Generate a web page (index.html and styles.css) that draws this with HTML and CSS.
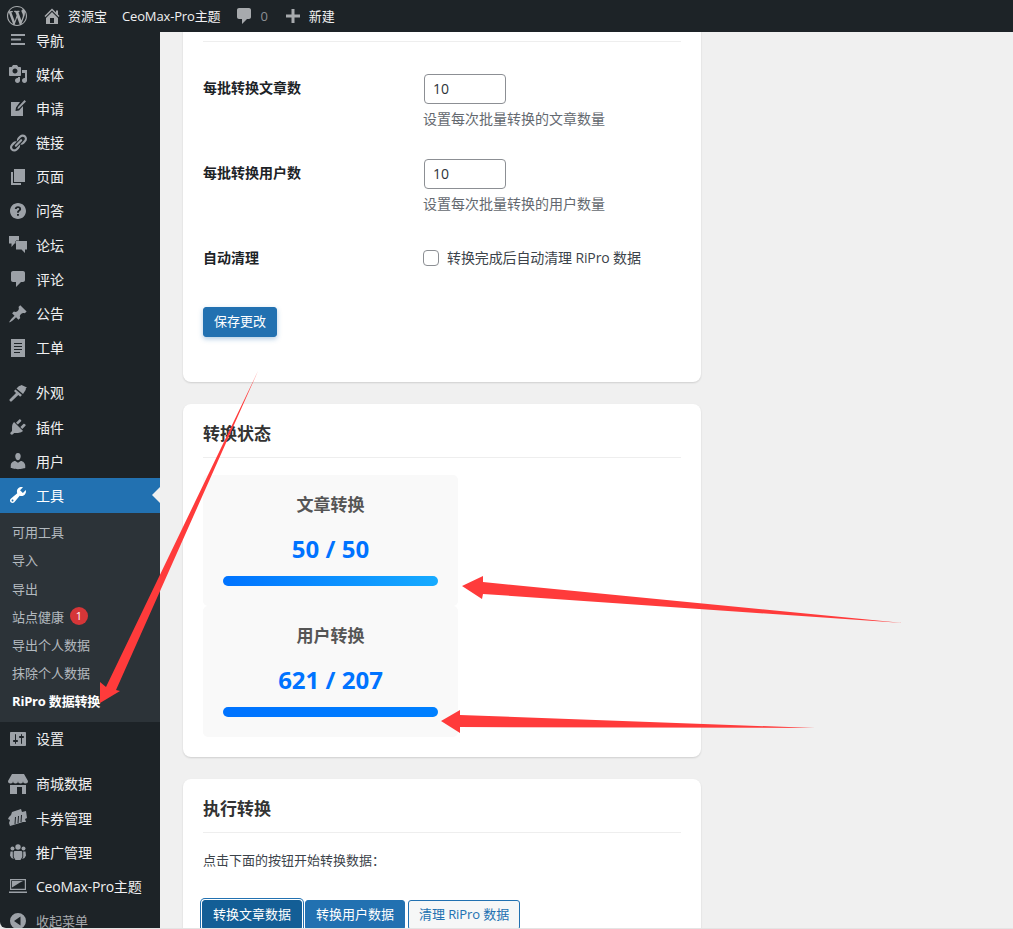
FILE: index.html
```html
<!DOCTYPE html>
<html lang="zh-CN">
<head>
<meta charset="utf-8">
<title>RiPro 数据转换</title>
<link rel="stylesheet" href="styles.css">
</head>
<body>
<header class="adminbar">
  <svg class="ab-logo" viewBox="0 0 20 20"><path d="M20 10c0-5.510-4.490-10-10-10C4.480 0 0 4.490 0 10c0 5.520 4.480 10 10 10 5.510 0 10-4.480 10-10zM7.780 15.370L4.370 6.220c.55-.02 1.170-.08 1.170-.08.5-.06.44-1.130-.06-1.110 0 0-1.450.11-2.370.11-.18 0-.37 0-.58-.01C4.120 2.690 6.870 1.110 10 1.110c2.330 0 4.450.87 6.050 2.340-.68-.11-1.650.39-1.650 1.580 0 .74.45 1.360.9 2.100.35.61.55 1.360.55 2.460 0 1.490-1.400 5-1.400 5l-3.030-8.370c.54-.02.82-.17.82-.17.5-.05.44-1.250-.06-1.220 0 0-1.440.12-2.380.12-.87 0-2.330-.12-2.330-.12-.5-.03-.56 1.200-.06 1.220l.92.08 1.260 3.410zM17.410 10c.24-.64.74-1.870.43-4.250.7 1.290 1.050 2.710 1.050 4.250 0 3.290-1.730 6.240-4.400 7.780.97-2.590 1.940-5.200 2.920-7.780zM6.100 18.090C3.120 16.650 1.110 13.530 1.110 10c0-1.300.23-2.480.72-3.590C3.250 10.300 4.670 14.200 6.100 18.090zm4.030-6.630l2.580 6.980c-.86.29-1.760.45-2.710.45-.79 0-1.570-.11-2.290-.33.81-2.380 1.620-4.740 2.420-7.100z"/></svg>
  <svg class="ab-icon ab-home" viewBox="0 0 20 20"><path d="M16 8.500l1.530 1.530-1.060 1.060L10 4.620l-6.470 6.470-1.060-1.060L10 2.500l4 4v-2h2v4zm-6-2.460l6 5.990V18H4v-5.970zM12 17v-5H8v5h4z"/></svg>
  <span class="ab-text ab-site">资源宝</span>
  <span class="ab-text ab-theme">CeoMax-Pro主题</span>
  <svg class="ab-icon ab-comment" viewBox="0 0 20 20"><path d="M5 2h10c1.100 0 2 .9 2 2v7c0 1.100-.9 2-2 2h-2l-5 5v-5H5c-1.100 0-2-.9-2-2V4c0-1.100.9-2 2-2z"/></svg>
  <span class="ab-count">0</span>
  <svg class="ab-icon ab-plus" viewBox="0 0 20 20"><path d="M17 8.500v3h-5.500V17h-3v-5.500H3v-3h5.500V3h3v5.500H17z"/></svg>
  <span class="ab-text ab-new">新建</span>
</header>

<div class="layout">
  <nav class="sidebar">
    <ul class="menu">
      <li class="item"><svg class="ico" viewBox="0 0 20 20"><path d="M3 4h14v2H3zm0 4.500h10v2H3zM3 13h14v2H3z"/></svg><span>导航</span></li>
      <li class="item"><svg class="ico" viewBox="0 0 20 20"><path d="M13 11V4c0-.55-.45-1-1-1h-1.670L9 1H5L3.670 3H2c-.55 0-1 .45-1 1v7c0 .55.45 1 1 1h10c.55 0 1-.45 1-1zM7 4.500c1.380 0 2.500 1.120 2.500 2.500S8.380 9.500 7 9.500 4.500 8.380 4.500 7 5.620 4.500 7 4.500zM14 6h5v10.500c0 1.380-1.120 2.500-2.500 2.500S14 17.880 14 16.500s1.120-2.500 2.500-2.500c.17 0 .34.020.5.050V9h-3V6zm-4 8.050V13h2v3.500c0 1.380-1.120 2.500-2.500 2.500S7 17.880 7 16.500 8.120 14 9.500 14c.17 0 .34.020.5.050z" fill-rule="evenodd"/></svg><span>媒体</span></li>
      <li class="item"><svg class="ico" viewBox="0 0 20 20"><path d="M3 4h9L8 9.500 7.500 13l3.500-.5L15 8v10H3zM16.500 2L18 3.500 11 10.500 9.500 11l.5-2z"/></svg><span>申请</span></li>
      <li class="item"><svg class="ico" viewBox="0 0 20 20"><path d="M17.740 2.760c1.680 1.690 1.680 4.410 0 6.100l-1.530 1.520c-1.120 1.120-2.700 1.490-4.130 1.120l2.620-2.620.76-.77.76-.76c.84-.84.84-2.210 0-3.050-.84-.84-2.210-.84-3.050 0l-.76.76-3.390 3.390c-.37-1.430 0-3.010 1.120-4.130l1.520-1.530c1.690-1.680 4.410-1.680 6.100 0zM8.590 13.430l5.340-5.340c.42-.42.42-1.100 0-1.520-.44-.43-1.130-.39-1.530 0l-5.330 5.340c-.42.42-.42 1.100 0 1.520.44.43 1.130.39 1.520 0zm-.76 2.290l4.140-4.140c.37 1.430 0 3.010-1.120 4.130l-1.520 1.530c-1.690 1.680-4.410 1.680-6.100 0-1.680-1.690-1.680-4.410 0-6.100l1.530-1.520c1.120-1.120 2.700-1.490 4.130-1.120l-4.140 4.140c-.85.84-.85 2.210 0 3.050.84.84 2.210.84 3.050 0z"/></svg><span>链接</span></li>
      <li class="item"><svg class="ico" viewBox="0 0 20 20"><path d="M6 15V2h11v13H6zm-1 1h8v2H3V5h2v11z"/></svg><span>页面</span></li>
      <li class="item"><svg class="ico" viewBox="0 0 20 20"><path fill-rule="evenodd" d="M18 10c0-4.420-3.580-8-8-8s-8 3.580-8 8 3.580 8 8 8 8-3.580 8-8zM10 5.300c-1.900 0-3.100 1.100-3.200 2.800h1.900c.1-.8.5-1.200 1.300-1.200.7 0 1.200.4 1.200 1 0 .6-.3.9-1 1.400-.9.6-1.100 1.200-1.100 2.100v.4h1.800v-.3c0-.6.2-.8.9-1.300.8-.6 1.300-1.200 1.300-2.300 0-1.500-1.300-2.600-3.100-2.600zM9 12.900h1.900v1.900H9z"/></svg><span>问答</span></li>
      <li class="item"><svg class="ico" viewBox="0 0 20 20"><path d="M1 1h10v7.500H6.500L3.500 12V8.500H1z"/><path d="M8 6h11v8.500h-2V18l-3.500-3.500H8z" stroke="#1d2327" stroke-width="1" paint-order="stroke"/></svg><span>论坛</span></li>
      <li class="item"><svg class="ico" viewBox="0 0 20 20"><path d="M5 2h10c1.100 0 2 .9 2 2v7c0 1.100-.9 2-2 2h-2l-5 5v-5H5c-1.100 0-2-.9-2-2V4c0-1.100.9-2 2-2z"/></svg><span>评论</span></li>
      <li class="item"><svg class="ico" viewBox="0 0 20 20"><path d="M10.440 3.020l1.820-1.820 6.360 6.350-1.830 1.820c-1.050-.68-2.480-.57-3.410.36l-.75.75c-.92.93-1.040 2.350-.35 3.400l-1.830 1.820-2.410-2.410-2.800 2.790c-.42.42-3.380 2.710-3.800 2.290s1.860-3.390 2.280-3.810l2.790-2.790L4.100 9.360l1.830-1.820c1.050.69 2.480.57 3.400-.36l.75-.75c.93-.92 1.050-2.350.36-3.410z"/></svg><span>公告</span></li>
      <li class="item"><svg class="ico" viewBox="0 0 20 20"><path fill-rule="evenodd" d="M3 1h14v18H3zM6 5v1h8V5zm0 3v1h8V8zm0 3v1h8v-1zm0 3v1h6v-1z"/></svg><span>工单</span></li>
      <li class="sep"></li>
      <li class="item"><svg class="ico" viewBox="0 0 20 20"><path d="M13.500 2L19 4.500c-1.200.6-1.500 1.200-1.200 2.200L15 11 8.500 5.500 10.500 3.500C11.500 2.500 12.500 3 13.500 2zM7.500 6.500l6.500 5.500-1.800 1.800L10.300 12 3.500 18.500C2.500 19 1 17.500 1.500 16.500L8 10 6 8z"/></svg><span>外观</span></li>
      <li class="item"><svg class="ico" viewBox="0 0 20 20"><path d="M13.110 4.360L9.870 7.600 8 5.730l3.240-3.240c.35-.34 1.050-.2 1.560.32.52.51.66 1.210.31 1.550zm-8 1.770l.91-1.120 9.010 9.010-1.190.84c-.71.71-2.630 1.160-3.820 1.160H6.140L4.900 17.260c-.59.59-1.540.59-2.120 0-.59-.58-.59-1.530 0-2.120l1.240-1.240v-3.880c0-1.130.4-3.190 1.090-3.890zm7.260 3.970l3.240-3.240c.34-.35 1.040-.21 1.550.31.52.51.66 1.210.31 1.550l-3.240 3.250z"/></svg><span>插件</span></li>
      <li class="item"><svg class="ico" viewBox="0 0 20 20"><path d="M10 9.250c-2.270 0-2.730-3.440-2.730-3.440C7 4.020 7.820 2 9.970 2c2.160 0 2.980 2.020 2.710 3.810 0 0-.41 3.440-2.680 3.440zm0 2.570L12.720 10c2.390 0 4.520 2.330 4.520 4.530v2.490s-3.650 1.130-7.240 1.130c-3.650 0-7.240-1.130-7.240-1.130v-2.490c0-2.250 1.940-4.480 4.470-4.480z"/></svg><span>用户</span></li>
      <li class="item active"><svg class="ico" viewBox="0 0 20 20"><path d="M16.680 9.770c-1.340 1.340-3.300 1.670-4.950.99l-5.410 6.520c-.99.99-2.590.99-3.580 0s-.99-2.590 0-3.570l6.520-5.420c-.68-1.650-.35-3.610.99-4.950 1.280-1.280 3.120-1.620 4.720-1.060l-2.890 2.890 2.820 2.820 2.860-2.870c.53 1.580.18 3.390-1.080 4.650zM3.810 16.210c.4.39 1.030.39 1.420 0 .4-.4.4-1.030 0-1.430-.39-.39-1.020-.39-1.420 0-.39.4-.39 1.030 0 1.430z"/></svg><span>工具</span></li>
      <li>
        <ul class="submenu">
          <li>可用工具</li>
          <li>导入</li>
          <li>导出</li>
          <li>站点健康<b class="badge">1</b></li>
          <li>导出个人数据</li>
          <li>抹除个人数据</li>
          <li class="current">RiPro 数据转换</li>
        </ul>
      </li>
      <li class="item"><svg class="ico" viewBox="0 0 20 20"><path d="M18 16V4c0-.55-.45-1-1-1H3c-.55 0-1 .45-1 1v12c0 .55.45 1 1 1h14c.55 0 1-.45 1-1zM8 11h1c.55 0 1 .45 1 1s-.45 1-1 1H8v1.500c0 .28-.22.5-.5.5s-.5-.22-.5-.5V13H6c-.55 0-1-.45-1-1s.45-1 1-1h1V5.500c0-.28.22-.5.5-.5s.5.22.5.5V11zm5-2h-1c-.55 0-1-.45-1-1s.45-1 1-1h1V5.500c0-.28.22-.5.5-.5s.5.22.5.5V7h1c.55 0 1 .45 1 1s-.45 1-1 1h-1v5.500c0 .28-.22.5-.5.5s-.5-.22-.5-.5V9z"/></svg><span>设置</span></li>
      <li class="sep"></li>
      <li class="item"><svg class="ico" viewBox="0 0 20 20"><path d="M4 0h12l4 7a2.500 2.500 0 0 1-5 0 2.500 2.500 0 0 1-5 0 2.500 2.500 0 0 1-5 0 2.500 2.500 0 0 1-5 0zM2 11h16v9h-4v-7H9v7H2z"/></svg><span>商城数据</span></li>
      <li class="item"><svg class="ico" viewBox="0 0 20 20"><path fill-rule="evenodd" d="M1 9l2-2 1-3 9-3 1 3 4-1 1 7-2 1 1 3-3 0-13 4-1-3 1-3-2-1zM7 9l-.5 7 1 0 .5-7zm3-1-.5 7 1 0 .5-7zm3-1-.5 7 1 0 .5-7z"/></svg><span>卡券管理</span></li>
      <li class="item"><svg class="ico" viewBox="0 0 20 20"><circle cx="10" cy="5" r="2.700"/><circle cx="4.500" cy="6.500" r="2"/><circle cx="15.500" cy="6.500" r="2"/><path d="M7 9h6c.8 0 1.300.6 1.300 1.500V15L12.500 18h-5L5.700 15v-4.500C5.700 9.600 6.200 9 7 9zM2.500 9.500h2.300V15l1 2L3.500 16 2 13.500zM17.500 9.500h-2.300V15l-1 2 2.300-1 1.500-2.500z"/></svg><span>推广管理</span></li>
      <li class="item"><svg class="ico" viewBox="0 0 20 20"><path fill-rule="evenodd" d="M2 3h16v11H2zM3.200 4.200v8.600h13.600V4.200z"/><path d="M4 5h11l-3 1.500-8 5z"/><path d="M1 15.500h18V17H1z"/></svg><span class="tight">CeoMax-Pro主题</span></li>
      <li class="item collapse"><svg class="ico" viewBox="0 0 20 20"><path fill-rule="evenodd" d="M10 2a8 8 0 1 0 0 16 8 8 0 0 0 0-16zM12.500 5.500v9L6 10z"/></svg><span>收起菜单</span></li>
    </ul>
  </nav>

  <main class="content">
    <section class="card">
      <div class="card-head"></div>
      <div class="form-row">
        <div class="form-label">每批转换文章数</div>
        <div class="form-field">
          <input class="num" type="text" value="10">
          <p class="desc">设置每次批量转换的文章数量</p>
        </div>
      </div>
      <div class="form-row">
        <div class="form-label">每批转换用户数</div>
        <div class="form-field">
          <input class="num" type="text" value="10">
          <p class="desc">设置每次批量转换的用户数量</p>
        </div>
      </div>
      <div class="form-row">
        <div class="form-label">自动清理</div>
        <div class="form-field check-field">
          <span class="check"></span>
          <span class="check-text">转换完成后自动清理 RiPro 数据</span>
        </div>
      </div>
      <div class="submit"><button class="btn primary" type="button">保存更改</button></div>
    </section>

    <section class="card">
      <h2 class="card-head">转换状态</h2>
      <div class="stats">
        <div class="stat">
          <h3>文章转换</h3>
          <div class="value">50 / 50</div>
          <div class="bar grad1"></div>
        </div>
        <div class="stat">
          <h3>用户转换</h3>
          <div class="value">621 / 207</div>
          <div class="bar grad2"></div>
        </div>
      </div>
    </section>

    <section class="card">
      <h2 class="card-head">执行转换</h2>
      <p class="intro">点击下面的按钮开始转换数据：</p>
      <div class="actions">
        <button class="btn primary focus" type="button">转换文章数据</button>
        <button class="btn primary" type="button">转换用户数据</button>
        <button class="btn secondary" type="button">清理 RiPro 数据</button>
      </div>
    </section>
  </main>
</div>

<svg class="arrows" viewBox="0 0 1013 929">
  <polygon points="258,371 116,690 120,691 100,703 100,682 106,687"/>
  <polygon points="903,623 483,594 482,599 462,586 483,576 483,582"/>
  <polygon points="815,728 460,727 460,733 441,721 460,710 460,715"/>
</svg>
</body>
</html>
```

FILE: styles.css
```css
* { box-sizing: border-box; }
html, body { margin: 0; padding: 0; height: 929px; overflow: hidden; }
body {
  position: relative;
  background: #e4e4e4;
  font-family: "Open Sans", "Noto Sans CJK SC", sans-serif;
  font-size: 13px;
  color: #3c434a;
}
ul { list-style: none; margin: 0; padding: 0; }

/* admin bar */
.adminbar {
  height: 32px;
  background: #1d2327;
  display: flex;
  align-items: center;
  color: #f0f0f1;
}
.ab-logo { width: 20px; height: 20px; margin-left: 7px; fill: #a7aaad; }
.ab-icon { width: 20px; height: 20px; fill: #a7aaad; }
.ab-home { margin-left: 15px; }
.ab-text { font-size: 13px; line-height: 32px; }
.ab-site { margin-left: 6px; }
.ab-theme { margin-left: 15px; letter-spacing: -0.15px; }
.ab-comment { margin-left: 14px; }
.ab-count { margin-left: 6px; color: #8c8f94; font-size: 13px; }
.ab-plus { margin-left: 15px; }
.ab-new { margin-left: 6px; }

/* layout */
.layout {
  display: flex;
  height: 896px;
  overflow: hidden;
  background: #f0f0f0;
  border-bottom-left-radius: 6px;
}

/* sidebar */
.sidebar {
  width: 160px;
  flex: none;
  background: #1d2327;
  overflow: hidden;
}
.menu { margin-top: -9.1px; }
.item {
  position: relative;
  height: 34.2px;
  display: flex;
  align-items: center;
  font-size: 14px;
  color: #f0f0f1;
}
.item span { margin-top: -1px; }
.item .tight { letter-spacing: -0.2px; }
.item .ico {
  width: 20px;
  height: 20px;
  margin: 0 8px;
  flex: none;
  fill: #9ca1a7;
}
.item.active { background: #2271b1; color: #fff; }
.item.active .ico { fill: #fff; }
.item.active::after {
  content: "";
  position: absolute;
  right: 0;
  top: 9px;
  border: 8px solid transparent;
  border-right-color: #f0f0f0;
  border-left-width: 0;
}
.item.collapse { font-size: 13px; color: #a7aaad; }
.sep { height: 11px; }
.submenu { background: #2c3338; padding: 5px 0 6px 12px; height: 209px; }
.submenu li {
  height: 28.2px;
  display: flex;
  align-items: center;
  color: rgba(240, 246, 252, 0.7);
  font-size: 13px;
}
.submenu .current { color: #fff; font-weight: 700; letter-spacing: -0.2px; }
.badge {
  width: 18px;
  height: 18px;
  margin-left: 6px;
  border-radius: 50%;
  background: #d63638;
  color: #fff;
  font-size: 11px;
  font-weight: 400;
  line-height: 18px;
  text-align: center;
}

/* content */
.content {
  flex: 1;
  min-width: 0;
  margin-top: -44px;
  padding-left: 23px;
}
.card {
  width: 518px;
  margin-bottom: 22px;
  padding: 0 20px;
  background: #fff;
  border-radius: 8px;
  box-shadow: 0 1px 2px rgba(0, 0, 0, 0.14);
}
.card-head {
  height: 54px;
  margin: 0 0 17px;
  border-bottom: 1px solid #eee;
  font-size: 17px;
  font-weight: 700;
  line-height: 60px;
  color: #333;
}

/* form */
.form-row { display: flex; }
.form-label {
  width: 220px;
  flex: none;
  padding-top: 20px;
  font-size: 14px;
  font-weight: 700;
  line-height: 17px;
  color: #1d2327;
}
.form-field { padding: 15px 0; font-size: 14px; }
.num {
  display: block;
  width: 82px;
  height: 30px;
  margin-left: 1px;
  padding: 0 8px 2px;
  border: 1px solid #8c8f94;
  border-radius: 4px;
  background: #fff;
  font-family: inherit;
  font-size: 14px;
  color: #2c3338;
}
.desc { margin: 4px 0 0; line-height: 21px; color: #646970; }
.check-field {
  display: flex;
  align-items: center;
  gap: 8px;
  height: 58px;
  color: #3c434a;
}
.check-text { margin-top: -2px; letter-spacing: -0.12px; }
.check {
  width: 16px;
  height: 16px;
  flex: none;
  border: 1px solid #8c8f94;
  border-radius: 4px;
  background: #fff;
}
.submit { padding: 20px 0 45px; }

/* buttons */
.btn {
  height: 30px;
  padding: 0 10px 2px;
  border-radius: 3px;
  font-family: inherit;
  font-size: 13px;
  line-height: 26px;
}
.primary { border: 1px solid #2271b1; background: #2271b1; color: #fff; }
.submit .primary { box-shadow: 0 2px 5px rgba(34, 113, 177, 0.35); }
.focus { background: #135e96; border-color: #135e96; box-shadow: 0 0 0 1px #fff, 0 0 0 2px #2271b1; }
.secondary { border: 1px solid #2271b1; background: #f6f7f7; color: #2271b1; letter-spacing: -0.08px; }

/* stats */
.stats { padding-bottom: 20px; }
.stat {
  width: 255px;
  height: 131px;
  padding: 20px;
  background: #f9f9f9;
  border-radius: 5px;
  text-align: center;
}
.stat h3 {
  margin: 0;
  font-size: 17px;
  font-weight: 700;
  line-height: 20px;
  color: #555;
}
.value {
  margin-top: 20px;
  font-size: 24px;
  font-weight: 700;
  line-height: 28px;
  color: #0073ff;
}
.bar { height: 10px; margin-top: 13px; border-radius: 5px; }
.grad1 { background: linear-gradient(90deg, #0073ff, #17abff); }
.grad2 { background: linear-gradient(90deg, #0073ff, #0080ff); }

/* actions */
.intro { margin: 0; line-height: 20px; }
.actions { display: flex; gap: 3px; margin: 30px 0 0 -1px; padding-bottom: 20px; }

/* annotation arrows */
.arrows {
  position: absolute;
  left: 0;
  top: 0;
  width: 1013px;
  height: 929px;
  fill: #ff3b3b;
  pointer-events: none;
}
```
